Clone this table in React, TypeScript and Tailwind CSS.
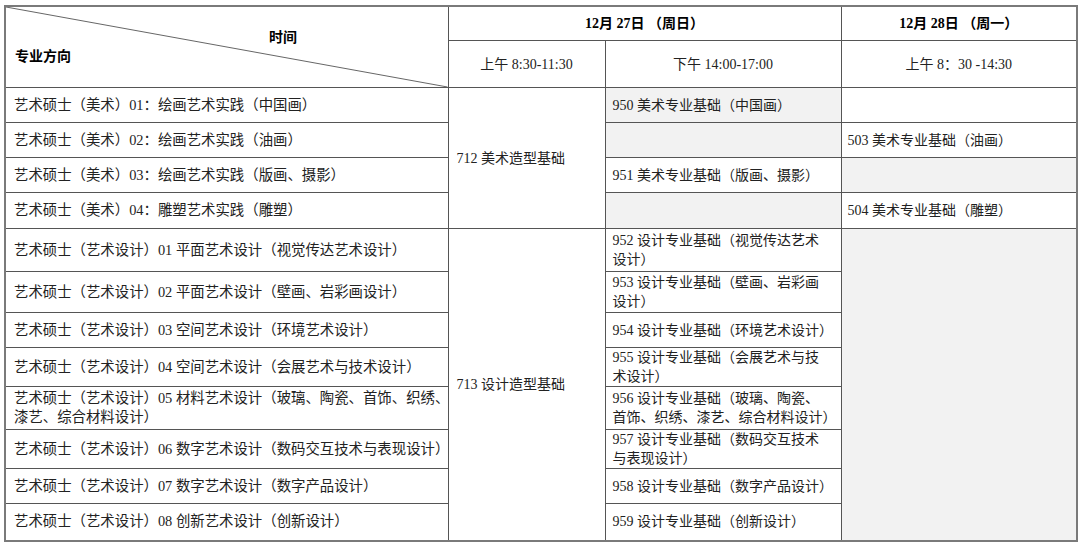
const font = { fontFamily: "'Liberation Serif', 'Noto Sans CJK SC', serif" }

const rows = [
  { major: "艺术硕士（美术）01：绘画艺术实践（中国画）", h: "h-[35px]" },
  { major: "艺术硕士（美术）02：绘画艺术实践（油画）", h: "h-[35px]" },
  { major: "艺术硕士（美术）03：绘画艺术实践（版画、摄影）", h: "h-[35px]" },
  { major: "艺术硕士（美术）04：雕塑艺术实践（雕塑）", h: "h-[36px]" },
]

const design = [
  { major: ["艺术硕士（艺术设计）01 平面艺术设计（视觉传达艺术设计）"], exam: ["952 设计专业基础（视觉传达艺术", "设计）"], h: "h-[43px]" },
  { major: ["艺术硕士（艺术设计）02 平面艺术设计（壁画、岩彩画设计）"], exam: ["953 设计专业基础（壁画、岩彩画", "设计）"], h: "h-[41px]" },
  { major: ["艺术硕士（艺术设计）03 空间艺术设计（环境艺术设计）"], exam: ["954 设计专业基础（环境艺术设计）"], h: "h-[35px]" },
  { major: ["艺术硕士（艺术设计）04 空间艺术设计（会展艺术与技术设计）"], exam: ["955 设计专业基础（会展艺术与技", "术设计）"], h: "h-[39px]" },
  { major: ["艺术硕士（艺术设计）05 材料艺术设计（玻璃、陶瓷、首饰、织绣、", "漆艺、综合材料设计）"], exam: ["956 设计专业基础（玻璃、陶瓷、", "首饰、织绣、漆艺、综合材料设计）"], h: "h-[43px]" },
  { major: ["艺术硕士（艺术设计）06 数字艺术设计（数码交互技术与表现设计）"], exam: ["957 设计专业基础（数码交互技术", "与表现设计）"], h: "h-[39px]" },
  { major: ["艺术硕士（艺术设计）07 数字艺术设计（数字产品设计）"], exam: ["958 设计专业基础（数字产品设计）"], h: "h-[35px]" },
  { major: ["艺术硕士（艺术设计）08 创新艺术设计（创新设计）"], exam: ["959 设计专业基础（创新设计）"], h: "h-[37px]" },
]

function Lines({ items }: { items: string[] }) {
  return (
    <>
      {items.map((t, i) => (
        <div key={i} className="whitespace-nowrap">{t}</div>
      ))}
    </>
  )
}

const cell = "border border-[#555] p-0 align-middle"
const sub = "text-[14px]"

export default function App() {
  return (
    <div className="w-[1080px] h-[547px] bg-white pt-[5px] pl-[4px] text-[#222]" style={font}>
      <table className="border-collapse table-fixed w-[1072px] border-2 border-[#7a7a7a]">
        <colgroup>
          <col className="w-[443px]" />
          <col className="w-[157px]" />
          <col className="w-[236px]" />
          <col className="w-[236px]" />
        </colgroup>
        <thead>
          <tr className="h-[34px]">
            <th rowSpan={2} className={`${cell} relative font-bold text-[14px] text-black`}>
              <svg className="absolute inset-0 w-full h-full" preserveAspectRatio="none" viewBox="0 0 100 100">
                <line x1="0" y1="0" x2="100" y2="100" stroke="#555" strokeWidth="0.9" vectorEffect="non-scaling-stroke" />
              </svg>
              <div className="flex flex-col h-[80px] px-[9px]">
                <div className="pl-[254px] pt-[24px] leading-none text-left">时间</div>
                <div className="pt-[5px] leading-none text-left">专业方向</div>
              </div>
            </th>
            <th colSpan={2} className={`${cell} font-bold text-[14px] text-black whitespace-pre`}>12月 27日 （周日）</th>
            <th className={`${cell} font-bold text-[14px] text-black whitespace-pre`}>12月 28日 （周一）</th>
          </tr>
          <tr className="h-[46px]">
            <th className={`${cell} font-normal ${sub}`}>上午 8:30-11:30</th>
            <th className={`${cell} font-normal ${sub}`}>下午 14:00-17:00</th>
            <th className={`${cell} font-normal ${sub}`}>上午 8：30 -14:30</th>
          </tr>
        </thead>
        <tbody className="text-[14.4px] leading-[19px]">
          {rows.map((r, i) => (
            <tr key={i} className={r.h}>
              <td className={`${cell} pl-[8px]`}>{r.major}</td>
              {i === 0 && (
                <td rowSpan={4} className={`${cell} pl-[8px] ${sub}`}>712 美术造型基础</td>
              )}
              {i === 0 && <td className={`${cell} pl-[7px] ${sub} bg-[#f2f2f2]`}>950 美术专业基础（中国画）</td>}
              {i === 0 && <td className={`${cell}`} />}
              {i === 1 && <td className={`${cell} bg-[#f2f2f2]`} />}
              {i === 1 && <td className={`${cell} pl-[6px] ${sub}`}>503 美术专业基础（油画）</td>}
              {i === 2 && <td className={`${cell} pl-[7px] ${sub}`}>951 美术专业基础（版画、摄影）</td>}
              {i === 2 && <td className={`${cell} bg-[#f2f2f2]`} />}
              {i === 3 && <td className={`${cell} bg-[#f2f2f2]`} />}
              {i === 3 && <td className={`${cell} pl-[6px] ${sub}`}>504 美术专业基础（雕塑）</td>}
            </tr>
          ))}
          {design.map((r, i) => (
            <tr key={i} className={r.h}>
              <td className={`${cell} pl-[8px]`}>
                <Lines items={r.major} />
              </td>
              {i === 0 && (
                <td rowSpan={8} className={`${cell} pl-[8px] ${sub}`}>713 设计造型基础</td>
              )}
              <td className={`${cell} pl-[7px] ${sub}`}>
                <Lines items={r.exam} />
              </td>
              {i === 0 && <td rowSpan={8} className={`${cell} bg-[#f2f2f2]`} />}
            </tr>
          ))}
        </tbody>
      </table>
    </div>
  )
}
